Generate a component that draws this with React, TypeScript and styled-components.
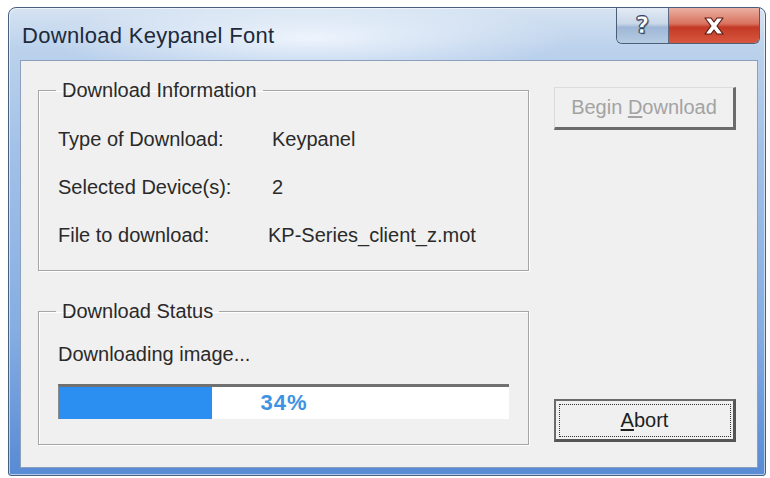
import React from 'react'
import styled, { createGlobalStyle } from 'styled-components'

const GlobalStyle = createGlobalStyle`
  html, body {
    margin: 0;
    padding: 0;
    background: #ffffff;
  }
  body {
    font-family: 'Liberation Sans', Arial, sans-serif;
    color: #2a2a2a;
  }
`

const Window = styled.div`
  box-sizing: border-box;
  width: 758px;
  height: 469px;
  margin: 7px 0 0 8px;
  display: flex;
  flex-direction: column;
  border: 1px solid #47607f;
  border-radius: 8px 8px 3px 3px;
  background: linear-gradient(
    180deg,
    #d6e3f2 0px,
    #bcd2ec 40px,
    #a3c1e8 140px,
    #86aee3 320px,
    #5a8cd5 460px
  );
  box-shadow: inset 0 0 0 1px rgba(255, 255, 255, 0.55);
`

const TitleBar = styled.div`
  display: flex;
  align-items: flex-start;
  justify-content: space-between;
  height: 54px;
  padding-left: 13px;
  background: radial-gradient(
    ellipse 260px 40px at 300px 30px,
    rgba(245, 249, 255, 0.85),
    rgba(245, 249, 255, 0)
  );
`

const Title = styled.h1`
  margin: 15px 0 0;
  font-size: 22px;
  font-weight: normal;
  color: #1d2a3a;
  letter-spacing: 0.3px;
`

const Controls = styled.div`
  display: flex;
  margin-right: 5px;
  border: 1px solid #4b5d77;
  border-top: none;
  border-radius: 0 0 6px 6px;
  overflow: hidden;
`

const CaptionButton = styled.div<{ $kind: 'help' | 'close' }>`
  display: flex;
  align-items: center;
  justify-content: center;
  height: 35px;
  width: ${({ $kind }) => ($kind === 'help' ? '51px' : '90px')};
  background: ${({ $kind }) =>
    $kind === 'help'
      ? 'linear-gradient(180deg, #e3ebf5 0%, #c9d7e8 45%, #9fb7d6 55%, #b6cbe3 100%)'
      : 'linear-gradient(180deg, #eab0a2 0%, #d9725f 45%, #c33a26 55%, #d8573f 100%)'};
  border-left: ${({ $kind }) => ($kind === 'close' ? '1px solid #5d6c80' : 'none')};
`

const HelpGlyph = styled.span`
  font-family: 'DejaVu Sans', sans-serif;
  font-size: 23px;
  font-weight: bold;
  line-height: 1;
  color: #ffffff;
  -webkit-text-stroke: 0.6px #2e4466;
  text-shadow: 1px 1px 1px #2e4466, -1px 0 0 #2e4466, 0 -1px 0 #2e4466;
`

const Client = styled.div`
  flex: 1;
  display: flex;
  margin: 0 7px 7px 11px;
  padding: 18px 21px 22px 17px;
  background: #f0f0f0;
  border: 1px solid #8aa0bc;
`

const LeftColumn = styled.div`
  display: flex;
  flex-direction: column;
  gap: 29px;
  width: 491px;
`

const Group = styled.fieldset<{ $height: number }>`
  box-sizing: border-box;
  height: ${({ $height }) => $height}px;
  margin: 0;
  padding: 0 19px;
  border: 1px solid #a6a6a6;
  box-shadow: 1px 1px 0 #ffffff, inset 1px 1px 0 #ffffff;
  min-width: 0;
`

const Legend = styled.legend`
  margin-left: -2px;
  padding: 0 6px;
  font-size: 20px;
  line-height: 22px;
`

const InfoGrid = styled.div`
  display: grid;
  grid-template-columns: 214px 1fr;
  row-gap: 26px;
  padding-top: 27px;
  font-size: 20px;
  line-height: 22px;
`

const Value = styled.span<{ $shift?: number }>`
  margin-left: ${({ $shift }) => $shift ?? 0}px;
`

const StatusText = styled.div`
  padding-top: 21px;
  font-size: 20px;
  line-height: 22px;
`

const Progress = styled.div`
  position: relative;
  box-sizing: border-box;
  height: 35px;
  margin-top: 19px;
  background: #ffffff;
  border-top: 3px solid #707070;
  border-left: 1px solid #8a8a8a;
  display: flex;
  align-items: center;
  justify-content: center;
`

const ProgressFill = styled.div`
  position: absolute;
  left: 0;
  top: 0;
  bottom: 0;
  background: #2b8ff2;
`

const ProgressLabel = styled.span`
  position: relative;
  font-size: 22px;
  font-weight: bold;
  color: #3d93e2;
  letter-spacing: 1px;
`

const RightColumn = styled.div`
  display: flex;
  flex-direction: column;
  justify-content: space-between;
  width: 182px;
  margin-left: 25px;
  padding: 8px 0 3px;
`

const Button = styled.button<{ $focused?: boolean }>`
  position: relative;
  box-sizing: border-box;
  height: 43px;
  width: 100%;
  padding: 0;
  font-family: 'Liberation Sans', Arial, sans-serif;
  font-size: 20px;
  background: #f0f0f0;
  color: ${({ disabled }) => (disabled ? '#a3a3a3' : '#1e1e1e')};
  border-style: solid;
  border-width: ${({ $focused }) => ($focused ? '2px 3px 3px 2px' : '1px 3px 3px 1px')};
  border-color: ${({ $focused }) =>
    $focused ? '#6a6a6a #555555 #555555 #6a6a6a' : '#dcdcdc #6b6b6b #6b6b6b #dcdcdc'};
  outline: ${({ $focused }) => ($focused ? '1px dotted #333333' : 'none')};
  outline-offset: -6px;
`

const Mnemonic = styled.u`
  text-underline-offset: 2px;
`

const CloseGlyph = () => (
  <svg width="22" height="18" viewBox="0 0 22 18">
    <path
      d="M2 1h6l3 4 3-4h6l-6 8 6 8h-6l-3-4-3 4H2l6-8z"
      fill="#ffffff"
      stroke="#5a1a12"
      strokeWidth="1.2"
      strokeLinejoin="round"
    />
  </svg>
)

const App = (): JSX.Element => {
  const percent = 34

  return (
    <>
      <GlobalStyle />
      <Window>
        <TitleBar>
          <Title>Download Keypanel Font</Title>
          <Controls>
            <CaptionButton $kind='help'>
              <HelpGlyph>?</HelpGlyph>
            </CaptionButton>
            <CaptionButton $kind='close'>
              <CloseGlyph />
            </CaptionButton>
          </Controls>
        </TitleBar>

        <Client>
          <LeftColumn>
            <Group $height={192}>
              <Legend>Download Information</Legend>
              <InfoGrid>
                <span>Type of Download:</span>
                <Value>Keypanel</Value>
                <span>Selected Device(s):</span>
                <Value>2</Value>
                <span>File to download:</span>
                <Value $shift={-4}>KP-Series_client_z.mot</Value>
              </InfoGrid>
            </Group>

            <Group $height={145}>
              <Legend>Download Status</Legend>
              <StatusText>Downloading image...</StatusText>
              <Progress>
                <ProgressFill style={{ width: `${percent}%` }} />
                <ProgressLabel>{percent}%</ProgressLabel>
              </Progress>
            </Group>
          </LeftColumn>

          <RightColumn>
            <Button disabled>
              Begin <Mnemonic>D</Mnemonic>ownload
            </Button>
            <Button $focused>
              <Mnemonic>A</Mnemonic>bort
            </Button>
          </RightColumn>
        </Client>
      </Window>
    </>
  )
}

export default App
